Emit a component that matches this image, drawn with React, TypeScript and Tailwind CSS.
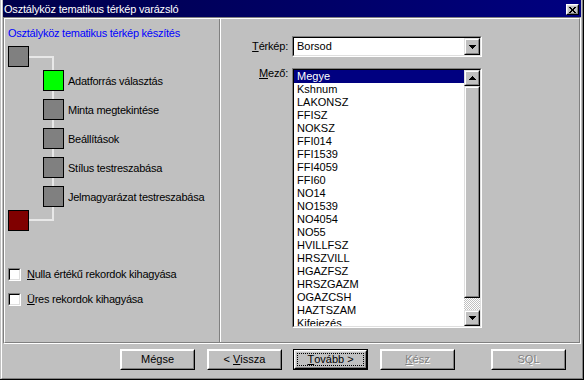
import React from "react";

const raised =
  "border border-t-[#dfdfdf] border-l-[#dfdfdf] border-r-black border-b-black";
const raisedInner =
  "border border-t-white border-l-white border-r-[#808080] border-b-[#808080]";
const sunken =
  "border border-t-[#808080] border-l-[#808080] border-r-white border-b-white";
const sunkenInner =
  "border border-t-black border-l-black border-r-[#dfdfdf] border-b-[#dfdfdf]";

function DownArrow() {
  return (
    <svg width="7" height="4" viewBox="0 0 7 4" shapeRendering="crispEdges">
      <path d="M0 0h7v1h-1v1h-1v1h-1v1h-1v-1h-1v-1h-1v-1h-1z" fill="#000" />
    </svg>
  );
}

function UpArrow() {
  return (
    <svg width="7" height="4" viewBox="0 0 7 4" shapeRendering="crispEdges">
      <path d="M3 0h1v1h1v1h1v1h1v1h-7v-1h1v-1h1v-1h1z" fill="#000" />
    </svg>
  );
}

function CloseGlyph() {
  return (
    <svg width="7" height="6" viewBox="0 0 7 6" shapeRendering="crispEdges">
      <path
        d="M0 0h2v1h-2z M5 0h2v1h-2z M1 1h2v1h-2z M4 1h2v1h-2z M2 2h3v2h-3z M1 4h2v1h-2z M4 4h2v1h-2z M0 5h2v1h-2z M5 5h2v1h-2z"
        fill="#000"
      />
    </svg>
  );
}

function ScrollBtn({ children }: { children: React.ReactNode }) {
  return (
    <div className={`w-[16px] h-[16px] bg-[#c0c0c0] ${raised}`}>
      <div className={`h-full ${raisedInner} flex items-center justify-center`}>
        {children}
      </div>
    </div>
  );
}

function Btn({
  children,
  disabled,
  className,
}: {
  children: React.ReactNode;
  disabled?: boolean;
  className?: string;
}) {
  return (
    <div className={`w-[75px] h-[21px] bg-[#c0c0c0] ${raised.replace("#dfdfdf", "#dfdfdf")} ${className ?? ""} border-t-white border-l-white`}>
      <div
        className={`h-full ${raisedInner} border-t-[#dfdfdf] border-l-[#dfdfdf] flex items-center justify-center ${
          disabled ? "text-[#808080] [text-shadow:1px_1px_0_#ffffff]" : ""
        }`}
      >
        {children}
      </div>
    </div>
  );
}

function DefaultBtn({ children }: { children: React.ReactNode }) {
  return (
    <div className="w-[75px] h-[21px] bg-[#c0c0c0] border border-black ml-[11px]">
      <div className="h-full border border-t-white border-l-white border-r-black border-b-black">
        <div className="h-full border border-t-[#dfdfdf] border-l-[#dfdfdf] border-r-[#808080] border-b-[#808080] p-px">
          <div className="h-full border border-dotted border-black flex items-center justify-center">
            {children}
          </div>
        </div>
      </div>
    </div>
  );
}

function Square({ color }: { color: string }) {
  return (
    <div
      className={`relative w-[21px] h-[21px] border border-black shrink-0 ${color}`}
    />
  );
}

function Checkbox() {
  return (
    <div className={`w-[13px] h-[13px] shrink-0 ${sunken}`}>
      <div className={`h-full ${sunkenInner} bg-white`} />
    </div>
  );
}

export default function App() {
  const items = [
    "Megye",
    "Kshnum",
    "LAKONSZ",
    "FFISZ",
    "NOKSZ",
    "FFI014",
    "FFI1539",
    "FFI4059",
    "FFI60",
    "NO14",
    "NO1539",
    "NO4054",
    "NO55",
    "HVILLFSZ",
    "HRSZVILL",
    "HGAZFSZ",
    "HRSZGAZM",
    "OGAZCSH",
    "HAZTSZAM",
    "Kifejezés",
  ];
  const steps = [
    { label: "Adatforrás választás", color: "bg-[#00ff00]" },
    { label: "Minta megtekintése", color: "bg-[#808080]" },
    { label: "Beállítások", color: "bg-[#808080]" },
    { label: "Stílus testreszabása", color: "bg-[#808080]" },
    { label: "Jelmagyarázat testreszabása", color: "bg-[#808080]" },
  ];

  return (
    <div className="w-[584px] h-[380px] bg-[#c0c0c0] pl-px border-r border-b border-black overflow-hidden text-[11px] leading-[13px] text-black font-['Liberation_Sans',Arial,sans-serif] select-none">
      <div className="h-full border-l border-r border-b border-l-white border-r-[#808080] border-b-[#808080] flex flex-col">
        {/* Title bar */}
        <div className="ml-px w-[578px] h-[17px] shrink-0 bg-gradient-to-r from-[#00004a] to-[#000080] flex items-start justify-between">
          <div className="pl-[1px] pt-[3px] text-white tracking-[-0.2px]">
            Osztályköz tematikus térkép varázsló
          </div>
          <div className={`mt-[4px] mr-[2px] w-[13px] h-[11px] bg-[#c0c0c0] border border-t-white border-l-white border-r-black border-b-black`}>
            <div className="h-full border border-t-[#dfdfdf] border-l-[#dfdfdf] border-r-[#808080] border-b-[#808080] flex items-center justify-center">
              <CloseGlyph />
            </div>
          </div>
        </div>

        {/* Etched frame */}
        <div className="ml-px w-[578px] h-[327px] shrink-0 border border-t-[#808080] border-l-[#808080] border-r-white border-b-white">
          <div className="h-full border border-t-white border-l-white border-r-[#808080] border-b-[#808080] flex">
            {/* Left panel */}
            <div className="w-[214px] shrink-0 pl-[3px] pt-[8px] flex flex-col tracking-[-0.25px]">
              <div className="text-[#0000ff] h-[13px]">
                Osztályköz tematikus térkép készítés
              </div>

              <div className="relative mt-[6px]">
                <div className="absolute left-[20px] top-[10px] w-[26px] h-[2px] bg-[#e8e8e8]" />
                <div className="absolute left-[44px] top-[10px] w-[2px] h-[165px] bg-[#e8e8e8]" />
                <div className="absolute left-[20px] top-[173px] w-[26px] h-[2px] bg-[#e8e8e8]" />

                <Square color="bg-[#808080]" />
                <div className="mt-[3px] flex flex-col gap-[8px]">
                  {steps.map((s) => (
                    <div key={s.label} className="ml-[35px] h-[21px] flex items-center gap-[4px]">
                      <Square color={s.color} />
                      <span className="pt-px">{s.label}</span>
                    </div>
                  ))}
                </div>
                <div className="mt-[3px]">
                  <Square color="bg-[#800000]" />
                </div>
              </div>

              <div className="mt-[37px] flex flex-col gap-[12px]">
                <div className="flex items-center gap-[6px] h-[13px]">
                  <Checkbox />
                  <span>
                    <span className="underline underline-offset-[1px]">N</span>ulla értékű rekordok kihagyása
                  </span>
                </div>
                <div className="flex items-center gap-[6px] h-[13px]">
                  <Checkbox />
                  <span>
                    <span className="underline underline-offset-[1px]">Ü</span>res rekordok kihagyása
                  </span>
                </div>
              </div>
            </div>

            {/* Divider */}
            <div className="w-[2px] shrink-0 border-l border-r border-l-[#808080] border-r-white" />

            {/* Right panel */}
            <div className="flex-1 pt-[17px] flex flex-col">
              <div className="flex items-center h-[21px]">
                <div className="w-[67px] text-right tracking-[-0.2px]">
                  <span className="underline underline-offset-[1px]">T</span>érkép:
                </div>
                <div className={`ml-[4px] w-[190px] h-[21px] ${sunken}`}>
                  <div className={`h-full ${sunkenInner} bg-white flex`}>
                    <div className="flex-1 pl-[3px] flex items-center">Borsod</div>
                    <div className={`w-[16px] h-full bg-[#c0c0c0] ${raised}`}>
                      <div className={`h-full ${raisedInner} flex items-center justify-center`}>
                        <DownArrow />
                      </div>
                    </div>
                  </div>
                </div>
              </div>

              <div className="mt-[11px] flex items-start">
                <div className="w-[67px] text-right -mt-px tracking-[-0.2px]">
                  <span className="underline underline-offset-[1px]">M</span>ező:
                </div>
                <div className={`ml-[4px] w-[190px] h-[260px] ${sunken}`}>
                  <div className={`h-full ${sunkenInner} bg-white flex`}>
                    <div className="flex-1 overflow-hidden">
                      {items.map((it, i) => (
                        <div
                          key={it}
                          className={
                            i === 0
                              ? "h-[13px] pl-[3px] bg-[#000080] text-white"
                              : "h-[13px] pl-[3px]"
                          }
                        >
                          {it}
                        </div>
                      ))}
                    </div>
                    <div className="w-[16px] shrink-0 flex flex-col">
                      <ScrollBtn>
                        <UpArrow />
                      </ScrollBtn>
                      <div className={`w-[16px] h-[212px] bg-[#c0c0c0] ${raised}`}>
                        <div className={`h-full ${raisedInner}`} />
                      </div>
                      <div className="w-[16px] h-[12px] bg-[repeating-conic-gradient(#ffffff_0%_25%,#c0c0c0_0%_50%)] bg-size-[2px_2px]" />
                      <ScrollBtn>
                        <DownArrow />
                      </ScrollBtn>
                    </div>
                  </div>
                </div>
              </div>
            </div>
          </div>
        </div>

        {/* Buttons */}
        <div className="pt-[5px] flex items-start">
          <Btn className="ml-[118px]">Mégse</Btn>
          <Btn className="ml-[12px]">
            &lt; <span className="underline underline-offset-[1px] ml-[3px]">V</span>issza
          </Btn>
          <DefaultBtn>
            <span className="underline underline-offset-[1px]">T</span>ovább &gt;
          </DefaultBtn>
          <Btn className="ml-[12px]" disabled>
            <span className="underline underline-offset-[1px]">K</span>ész
          </Btn>
          <Btn className="ml-[36px]" disabled>
            SQL
          </Btn>
        </div>
      </div>
    </div>
  );
}
